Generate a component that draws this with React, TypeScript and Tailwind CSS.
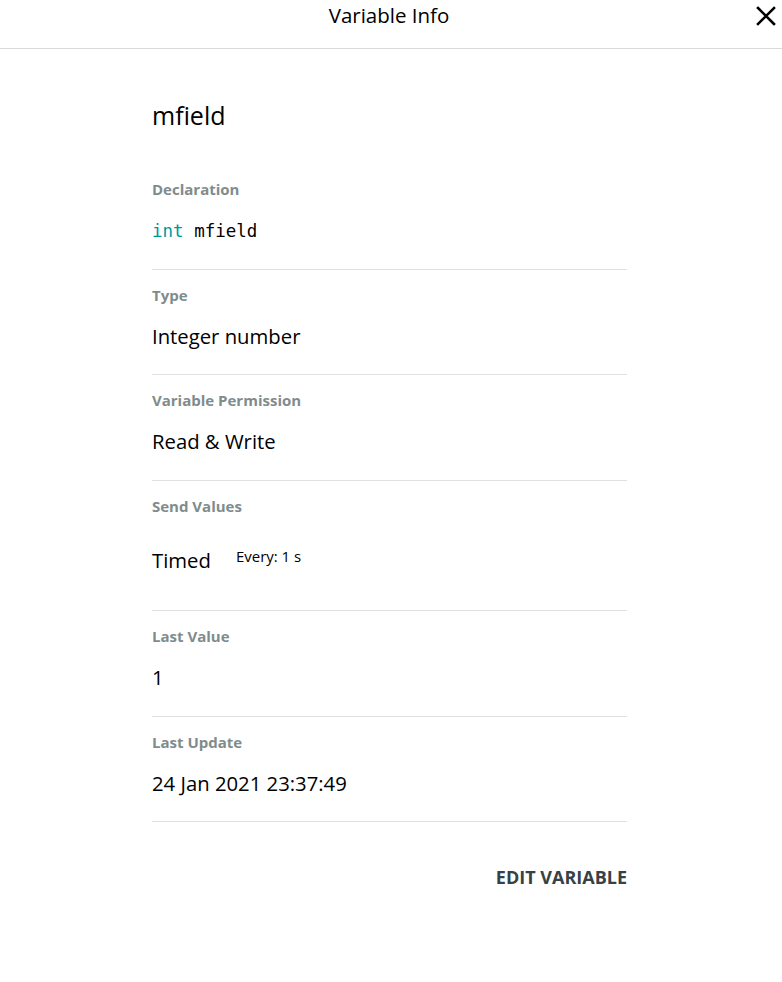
const Field = ({ label, children, pb, mt = "mt-[17px]" }: { label: string; children: React.ReactNode; pb: string; mt?: string }) => (
  <div className={`border-t border-[#dde1e3] pt-[15px] ${pb}`}>
    <div className="text-[15px] leading-5 font-bold text-[#7f8c8d]">{label}</div>
    <div className={mt}>{children}</div>
  </div>
);

export default function App() {
  return (
    <div className="min-h-[982px] bg-white font-['Open_Sans',sans-serif] text-black">
      {/* header */}
      <div className="relative h-[49px] border-b border-[#dadada]">
        <div className="pr-[4px] text-center text-[20.5px] leading-[30px]">Variable Info</div>
        <button className="absolute right-[4px] top-[4px] p-[2px]" aria-label="Close">
          <svg width="20" height="20" viewBox="0 0 20 20" fill="none" stroke="#000" strokeWidth="2.6" strokeLinecap="square">
            <path d="M2 2 L18 18 M18 2 L2 18" />
          </svg>
        </button>
      </div>

      <div className="ml-[152px] w-[475px]">
        <div className="mt-[50px] text-[25px] leading-8">mfield</div>

        <div className="mt-[48px] pb-[26px]">
          <div className="text-[15px] leading-5 font-bold text-[#7f8c8d]">Declaration</div>
          <div className="mt-[20px] font-['DejaVu_Sans_Mono',monospace] text-[17.5px] leading-6">
            <span className="text-[#00979d]">int</span> mfield
          </div>
        </div>

        <Field label="Type" pb="pb-[24px]">
          <div className="text-[20.3px] leading-7">Integer number</div>
        </Field>
        <Field label="Variable Permission" pb="pb-[25px]">
          <div className="text-[20.3px] leading-7">Read &amp; Write</div>
        </Field>
        <Field label="Send Values" pb="pb-[36px]" mt="mt-[30px]">
          <div className="flex items-start">
            <span className="text-[20.3px] leading-7">Timed</span>
            <span className="ml-[25px] text-[15px] leading-5">Every: 1 s</span>
          </div>
        </Field>
        <Field label="Last Value" pb="pb-[25px]">
          <div className="text-[20.3px] leading-7">1</div>
        </Field>
        <Field label="Last Update" pb="pb-[24px]">
          <div className="text-[20.3px] leading-7">24 Jan 2021 23:37:49</div>
        </Field>

        <div className="flex justify-end border-t border-[#dde1e3] pt-[43px]">
          <button className="text-[18px] leading-6 font-bold text-[#374146]">EDIT VARIABLE</button>
        </div>
      </div>
    </div>
  );
}
